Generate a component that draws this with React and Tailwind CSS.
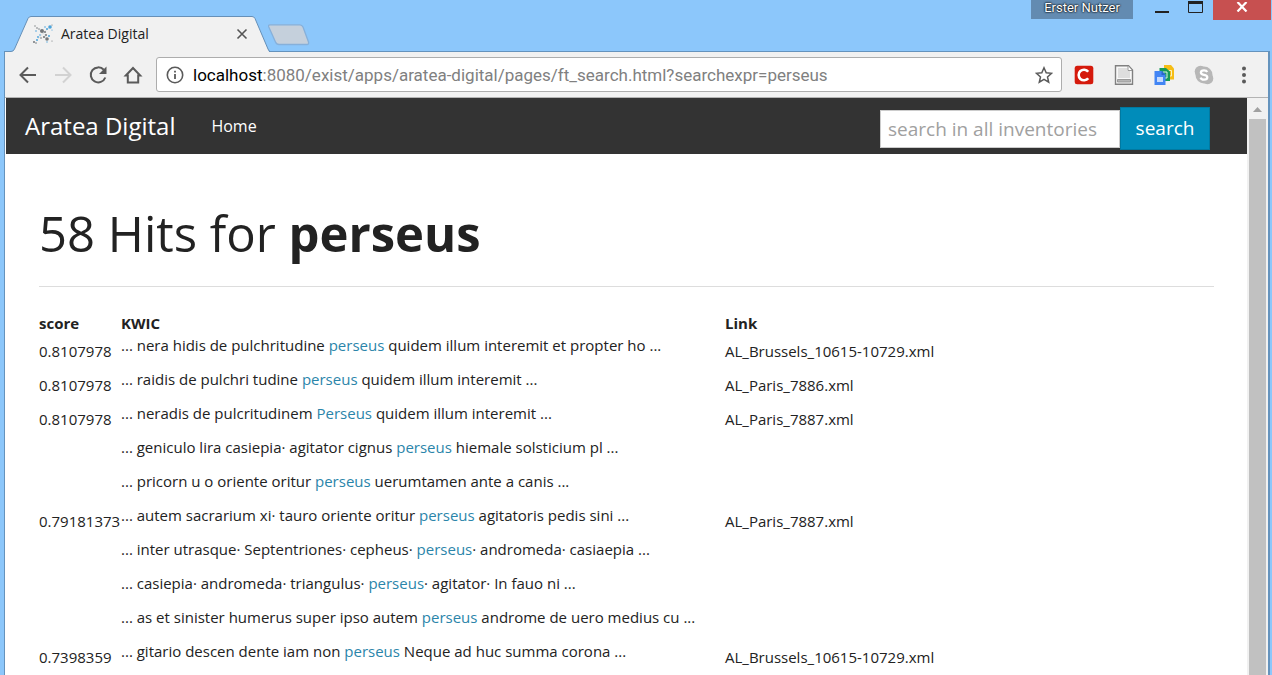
import React from "react";

const results = [
  { score: "0.8107978", link: "AL_Brussels_10615-10729.xml", lines: [["nera hidis de pulchritudine ", "perseus", " quidem illum interemit et propter ho"]] },
  { score: "0.8107978", link: "AL_Paris_7886.xml", lines: [["raidis de pulchri tudine ", "perseus", " quidem illum interemit"]] },
  {
    score: "0.8107978",
    link: "AL_Paris_7887.xml",
    lines: [
      ["neradis de pulcritudinem ", "Perseus", " quidem illum interemit"],
      ["geniculo lira casiepia· agitator cignus ", "perseus", " hiemale solsticium pl"],
      ["pricorn u o oriente oritur ", "perseus", " uerumtamen ante a canis"],
    ],
  },
  {
    score: "0.79181373",
    link: "AL_Paris_7887.xml",
    lines: [
      ["autem sacrarium xi· tauro oriente oritur ", "perseus", " agitatoris pedis sini"],
      ["inter utrasque· Septentriones· cepheus· ", "perseus", "· andromeda· casiaepia"],
      ["casiepia· andromeda· triangulus· ", "perseus", "· agitator· In fauo ni"],
      ["as et sinister humerus super ipso autem ", "perseus", " androme de uero medius cu"],
    ],
  },
  { score: "0.7398359", link: "AL_Brussels_10615-10729.xml", lines: [["gitario descen dente iam non ", "perseus", " Neque ad huc summa corona"]] },
];

function Favicon() {
  const blue = [[12, 3, 0.8], [17, 3, 1.8], [14, 5, 1], [3, 7, 0.8], [16, 12, 1], [5, 13, 0.9], [4, 16, 1], [7, 11, 0.8], [14, 18, 0.7], [19, 6, 0.6]];
  const gray = [[2, 2, 0.7], [4, 4, 0.8], [9, 7, 2], [12, 8, 1], [11, 13, 1.1], [14, 15, 1.8], [6, 5, 0.7], [1, 18, 1], [3, 19, 0.8], [13, 11, 1], [19, 1, 0.6], [19, 17, 0.6], [8, 14, 0.8]];
  return (
    <svg className="size-5 shrink-0" viewBox="0 0 20 20" aria-hidden="true">
      <path d="M5 5l4 2 5 8M16 4l-5 4-6 7" stroke="#d5dade" strokeWidth=".7" fill="none" />
      {blue.map(([x, y, r]) => <circle key={`b${x}-${y}`} cx={x} cy={y} r={r} fill="#4ba3da" />)}
      {gray.map(([x, y, r]) => <circle key={`g${x}-${y}`} cx={x} cy={y} r={r} fill="#73777b" />)}
    </svg>
  );
}

function Tab() {
  return (
    <div className="relative flex h-9 w-[264px] shrink-0 items-center pl-[27px] pr-[22px]">
      <svg className="absolute inset-0 h-9 w-[264px]" viewBox="0 0 264 36" aria-hidden="true">
        <path d="M0 36L7.500 35L22 2.500Q23 .5 25 .5H246Q248 .5 249 2.500L263 35.500V36z" fill="#f1f1f1" />
        <path d="M0 35.500H5Q7.500 35.500 8.500 33L22 2.500Q23 .5 25 .5H246Q248 .5 249 2.500L262 33Q263 35.500 264 35.500" fill="none" stroke="#6690b8" />
      </svg>
      <span className="relative flex w-full items-center">
        <Favicon />
        <span className="ml-2 grow text-sm text-[#222]">Aratea Digital</span>
        <button aria-label="Close tab">
          <svg className="size-3" viewBox="0 0 12 12" aria-hidden="true"><path d="M1.500 1.500l9 9m0-9l-9 9" stroke="#555" strokeWidth="1.600" /></svg>
        </button>
      </span>
    </div>
  );
}

function WindowTop() {
  return (
    <div className="flex h-[51px] shrink-0 items-start justify-between">
      <div className="flex items-start pl-1.5 pt-4">
        <Tab />
        <button aria-label="New tab" className="-ml-0.5 mt-2">
          <svg className="block h-6 w-11" viewBox="0 0 44 24" aria-hidden="true">
            <path d="M2 .8H32Q34 .8 35 3L40.500 18Q41 20.500 39 20.500H11Q8.500 20.500 7.500 18L.8 3Q0 .8 2 .8z" fill="#c5d0dc" stroke="#86b0da" strokeWidth="1.300" />
          </svg>
        </button>
      </div>
      <div className="flex items-start">
        <button className="flex h-[19px] w-[102px] justify-center bg-[#638bb1] font-[Roboto,sans-serif] text-[13px] leading-4 text-white [text-shadow:0_0_2px_#000,0_0_2px_#000]">Erster Nutzer</button>
        <button aria-label="Minimize" className="ml-[22px] pt-[11px]"><svg className="block h-0.5 w-3.5" viewBox="0 0 14 2"><path d="M0 0h14v2H0z" fill="#222" /></svg></button>
        <button aria-label="Maximize" className="ml-[19px] pt-px"><svg className="block h-3 w-[15px]" viewBox="0 0 15 12"><path d="M.5 1.500h14v10H.5z" fill="none" stroke="#222" /><path d="M0 0h15v3H0z" fill="#222" /></svg></button>
        <button aria-label="Close" className="ml-2.5 mr-px flex h-5 w-[58px] justify-center bg-[#c75050] pt-0.5"><svg className="block h-2.5 w-3" viewBox="0 0 12 10"><path d="M1.500 0l9 9.500m0-9.500l-9 9.500" stroke="#fff" strokeWidth="2.200" /></svg></button>
      </div>
    </div>
  );
}

function Toolbar() {
  return (
    <div className="flex h-[46px] shrink-0 items-center border-b border-[#b3b3b3] bg-[#f1f1f1] pl-[13px] pr-3.5">
      <div className="flex shrink-0 items-center gap-[15px]">
        <button aria-label="Back"><svg className="size-5" viewBox="0 0 20 20" fill="none" stroke="#5a5a5a" strokeWidth="2"><path d="M18 10H3M10 2.500L2.500 10l7.500 7.500" /></svg></button>
        <button aria-label="Forward"><svg className="size-5" viewBox="0 0 20 20" fill="none" stroke="#d2d2d2" strokeWidth="2"><path d="M2 10h15M10 2.500l7.500 7.500-7.500 7.500" /></svg></button>
        <button aria-label="Reload"><svg className="size-5" viewBox="0 0 20 20"><path d="M17.300 12.500A7.500 7.500 0 1 1 15.800 4.800" fill="none" stroke="#5a5a5a" strokeWidth="2" /><path d="M18.500 1.500V9H11z" fill="#5a5a5a" /></svg></button>
        <button aria-label="Home page"><svg className="size-5" viewBox="0 0 20 20" fill="none" stroke="#5a5a5a" strokeWidth="2"><path d="M2.800 10.500L10 3l7.200 7.500H15.200V17.500H4.800V10.500z" /></svg></button>
      </div>
      <div className="ml-[13px] flex h-[35px] grow items-center rounded-[3px] border border-[#adadad] bg-white pl-[9px] pr-2">
        <svg className="size-[18px] shrink-0" viewBox="0 0 18 18"><circle cx="9" cy="9" r="7.700" fill="none" stroke="#5a5a5a" strokeWidth="1.600" /><path d="M8.100 8h1.800v5H8.100zM8.100 4.700h1.800v1.800H8.100z" fill="#5a5a5a" /></svg>
        <span className="ml-[9px] grow whitespace-nowrap font-[Roboto,sans-serif] text-[17px] leading-6 text-[#808080]"><span className="text-black">localhost</span>:8080/exist/apps/aratea-digital/pages/ft_search.html?searchexpr=perseus</span>
        <button aria-label="Bookmark"><svg className="block size-[18px]" viewBox="0 0 18 18"><path d="M9 1.800l2.200 5 5.400.5-4.100 3.600 1.200 5.300L9 13.400l-4.700 2.800 1.200-5.300-4.100-3.600 5.400-.5z" fill="none" stroke="#5a5a5a" strokeWidth="1.500" /></svg></button>
      </div>
      <div className="ml-3 flex shrink-0 items-center gap-5">
        <button aria-label="Citavi picker"><svg className="size-5" viewBox="0 0 20 20"><rect x=".7" y=".7" width="18.600" height="18.600" rx="2.500" fill="#d51a0c" /><path d="M14.200 6.800A5.300 5.300 0 1 0 14.200 13.200" fill="none" stroke="#fff" strokeWidth="2.600" /></svg></button>
        <button aria-label="Save page"><svg className="size-5" viewBox="0 0 20 20"><path d="M1.500.8h13L18.500 5v14.200h-17z" fill="#f8f8f8" stroke="#808080" strokeWidth="1.400" /><path d="M4 3h9.500v3h2.500v7H4z" fill="#dedede" /><path d="M14 1v4.500h4" fill="#fff" stroke="#999" /><path d="M3.500 14.500h13v2.500h-13z" fill="#b5b5b5" stroke="#999" /></svg></button>
        <button aria-label="Office files"><svg className="size-5" viewBox="0 0 20 20"><path d="M10 0h7l3 3.500v11H10z" fill="#f5bd16" /><path d="M14 5.500h3.500v5.500H14z" fill="none" stroke="#fff2bd" /><path d="M5.500 3h6.500l4 3.500V16H5.500z" fill="#169b57" /><path d="M9 7h4v6H9z" fill="none" stroke="#d9f3e6" /><path d="M.5 6h7.500l3.500 3.500V20H.5z" fill="#4285f4" /><path d="M3 12h6v5H3z" fill="#c5dafc" /><path d="M7.500 6v4h4" fill="#2b66c9" /></svg></button>
        <button aria-label="Skype"><svg className="size-5" viewBox="0 0 20 20"><circle cx="6.500" cy="6.500" r="5.800" fill="#b7b7b7" /><circle cx="13.500" cy="13.500" r="5.800" fill="#b7b7b7" /><circle cx="10" cy="10" r="8.500" fill="#b7b7b7" /><path d="M13.200 7Q12.500 5.300 10 5.300 6.900 5.300 6.900 7.500 6.900 9.200 10 9.900 13.300 10.600 13.300 12.300 13.300 14.700 10 14.700 7.200 14.700 6.600 12.700" fill="none" stroke="#fff" strokeWidth="2.300" /></svg></button>
        <button aria-label="Menu" className="w-5"><svg className="mx-auto block h-5 w-1" viewBox="0 0 4 20" fill="#5a5a5a"><circle cx="2" cy="3.500" r="2" /><circle cx="2" cy="10" r="2" /><circle cx="2" cy="16.500" r="2" /></svg></button>
      </div>
    </div>
  );
}

function SiteHeader() {
  return (
    <header className="flex h-14 shrink-0 items-center bg-[#333] pl-[19px] pr-[37px] text-white">
      <a href="#" className="text-2xl">Aratea Digital</a>
      <a href="#" className="ml-9 text-base">Home</a>
      <form className="ml-auto flex items-center pt-[5px]" onSubmit={(e) => e.preventDefault()}>
        <input type="text" aria-label="search in all inventories" placeholder="search in all inventories" className="h-[38px] w-60 border border-[#ccc] bg-white px-[7px] text-[19px] text-[#444] placeholder:text-[#a0a0a0]" />
        <button className="h-[43px] w-[90px] border border-[#0079a1] bg-[#008cba] text-[19px]">search</button>
      </form>
    </header>
  );
}

function Results() {
  return (
    <main className="px-[33px] pt-[46px] text-[#222]">
      <h1 className="border-b border-[#ddd] pb-[19px] text-[49px] font-normal leading-[67px]">58 Hits for <b className="font-bold">perseus</b></h1>
      <table className="mt-[25px] w-full table-fixed text-left text-[15px] leading-[22px]">
        <thead>
          <tr>
            <th className="w-[82px] font-bold">score</th>
            <th className="w-[604px] font-bold">KWIC</th>
            <th className="font-bold">Link</th>
          </tr>
        </thead>
        <tbody>
          {results.map((r, i) => (
            <tr key={i} className="align-top">
              <td className="pt-1.5">{r.score}</td>
              <td className="whitespace-nowrap">
                {r.lines.map(([before, hit, after]) => (
                  <p key={before} className="pb-3">... {before}<a href="#" className="text-[#2b85aa]">{hit}</a>{after} ...</p>
                ))}
              </td>
              <td className="pt-1.5">{r.link}</td>
            </tr>
          ))}
        </tbody>
      </table>
    </main>
  );
}

export default function App() {
  return (
    <div className="flex h-screen flex-col overflow-hidden bg-[#8cc7fb] font-['Open_Sans',sans-serif]">
      <WindowTop />
      <div className="ml-1 mr-0.5 flex min-h-0 grow flex-col border-x border-t border-r-2 border-[#6593bd] bg-white">
        <Toolbar />
        <div className="flex min-h-0 grow pl-px">
          <div className="flex min-w-0 grow flex-col overflow-hidden">
            <SiteHeader />
            <Results />
          </div>
          <div className="flex w-[21px] shrink-0 flex-col items-center bg-[#f1f1f1]" aria-hidden="true">
            <svg className="h-[21px] w-[9px] shrink-0" viewBox="0 0 9 21"><path d="M0 14l4.500-5L9 14z" fill="#a0a0a0" /></svg>
            <div className="w-[17px] grow bg-[#c1c1c1]" />
          </div>
        </div>
      </div>
    </div>
  );
}
